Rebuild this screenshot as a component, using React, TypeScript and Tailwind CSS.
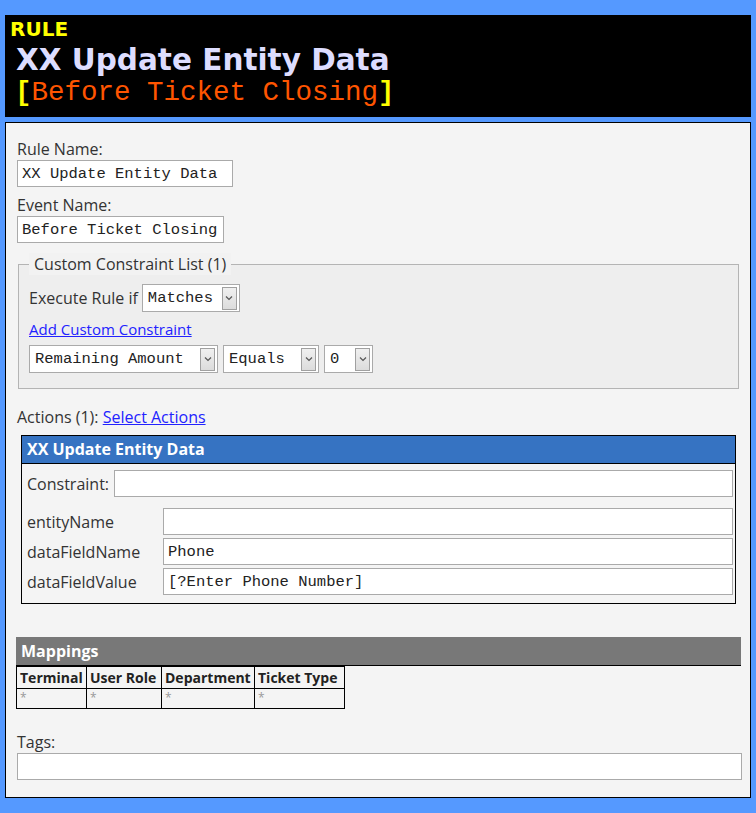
import React from "react";

const sans = "font-['Open_Sans','Noto_Sans',sans-serif]";
const mono = "font-['Liberation_Mono','DejaVu_Sans_Mono',monospace]";

function TextBox({ value, className = "" }: { value?: string; className?: string }) {
  return (
    <div
      className={`h-[27px] border border-[#aaaaaa] bg-white flex items-center px-[4px] pt-[3px] text-[15.5px] text-[#222] ${mono} ${className}`}
    >
      {value}
    </div>
  );
}

function Chevron() {
  return (
    <svg width="8" height="6" viewBox="0 0 8 6" className="block">
      <path d="M1 1.5 L4 4.5 L7 1.5" fill="none" stroke="#555" strokeWidth="1.2" />
    </svg>
  );
}

function Select({ value, width }: { value: string; width: string }) {
  return (
    <div
      className={`h-[28px] ${width} border border-[#aaaaaa] bg-white flex items-center justify-between pl-[5px] pr-[2px] text-[15.5px] text-[#222] ${mono}`}
    >
      <span className="pt-[2px]">{value}</span>
      <span className="w-[15px] h-[23px] border border-[#a0a0a0] bg-gradient-to-b from-[#f0f0f0] to-[#dcdcdc] flex items-center justify-center">
        <Chevron />
      </span>
    </div>
  );
}

function ParamRow({ label, value }: { label: string; value?: string }) {
  return (
    <div className="flex items-center h-[27px] mt-[3px]">
      <div className="w-[136px] shrink-0 text-[16px] text-[#333]">{label}</div>
      <TextBox value={value} className="flex-1" />
    </div>
  );
}

export default function App() {
  return (
    <div className={`min-h-[813px] bg-[#5599ff] pt-[15px] px-[5px] pb-[16px] ${sans}`}>
      {/* rule title banner */}
      <div className="bg-black h-[102px] pl-[5px] pt-[3px]">
        <div className="font-['DejaVu_Sans','Verdana',sans-serif] font-bold text-[20px] leading-[22px] text-[#ffff00]">
          RULE
        </div>
        <div className="font-['DejaVu_Sans','Verdana',sans-serif] font-bold text-[29.5px] leading-[33px] mt-[4px] text-[#ddddff] pl-[6px]">
          XX Update Entity Data
        </div>
        <div className={`text-[27.5px] leading-[32px] pl-[5px] ${mono}`}>
          <span className="text-[#ffff00] font-bold">[</span>
          <span className="text-[#ff5500]">Before Ticket Closing</span>
          <span className="text-[#ffff00] font-bold">]</span>
        </div>
      </div>

      {/* editor panel */}
      <div className="mt-[5px] border border-black bg-[#f4f4f4] pl-[11px] pr-[8px] pt-[15px] pb-[17px] text-[#333]">
        <div className="h-[22px] text-[16px] leading-[22px]">Rule Name:</div>
        <TextBox value="XX Update Entity Data" className="w-[216px]" />

        <div className="h-[22px] mt-[7px] text-[16px] leading-[22px]">Event Name:</div>
        <TextBox value="Before Ticket Closing" className="w-[207px]" />

        <fieldset className="mt-[10px] ml-[1px] mr-[3px] border border-[#b4b4b4] bg-[#eeeeee] pl-[10px] pb-[15px]">
          <legend className="px-[5px] bg-[#f2f2f2] text-[16px] leading-[22px] text-[#333]">
            Custom Constraint List (1)
          </legend>
          <div className="flex items-center gap-[4px] mt-[9px]">
            <span className="text-[16px]">Execute Rule if</span>
            <Select value="Matches" width="w-[98px]" />
          </div>
          <div className="mt-[8px] h-[18px] leading-[18px]">
            <a href="#" className="text-[15px] text-[#2222ff] underline">
              Add Custom Constraint
            </a>
          </div>
          <div className="flex gap-[5px] mt-[7px]">
            <Select value="Remaining Amount" width="w-[189px]" />
            <Select value="Equals" width="w-[96px]" />
            <Select value="0" width="w-[49px]" />
          </div>
        </fieldset>

        <div className="mt-[16px] h-[24px] text-[16px] leading-[24px]">
          Actions (1):{" "}
          <a href="#" className="text-[#2222ff] underline">
            Select Actions
          </a>
        </div>

        {/* action card */}
        <div className="mt-[6px] ml-[4px] mr-[6px] border border-black">
          <div className="h-[28px] bg-[#3673c2] border-b border-black pl-[5px] text-white font-bold text-[16px] leading-[27px]">
            XX Update Entity Data
          </div>
          <div className="pl-[5px] pr-[2px] pt-[6px] pb-[8px]">
            <div className="flex items-center h-[27px] gap-[5px]">
              <span className="text-[16px]">Constraint:</span>
              <TextBox className="flex-1" />
            </div>
            <div className="h-[8px]" />
            <ParamRow label="entityName" />
            <ParamRow label="dataFieldName" value="Phone" />
            <ParamRow label="dataFieldValue" value="[?Enter Phone Number]" />
          </div>
        </div>

        {/* mappings */}
        <div className="mt-[33px] -ml-[1px] mr-[1px] h-[29px] bg-[#787878] border-b border-black pl-[5px] text-white font-bold text-[16px] leading-[28px]">
          Mappings
        </div>
        <table className="-ml-[1px] border-collapse text-[14px]">
          <thead>
            <tr>
              {[
                ["Terminal", "w-[70px]"],
                ["User Role", "w-[75px]"],
                ["Department", "w-[93px]"],
                ["Ticket Type", "w-[90px]"],
              ].map(([h, w]) => (
                <th
                  key={h}
                  className={`${w} h-[22px] border border-black px-[3px] text-left font-bold text-[#222] whitespace-nowrap`}
                >
                  {h}
                </th>
              ))}
            </tr>
          </thead>
          <tbody>
            <tr>
              {[0, 1, 2, 3].map((i) => (
                <td key={i} className="h-[20px] border border-black px-[3px] text-[12px] leading-[18px] text-[#999] align-top">
                  *
                </td>
              ))}
            </tr>
          </tbody>
        </table>

        <div className="mt-[22px] h-[22px] text-[16px] leading-[22px]">Tags:</div>
        <TextBox className="w-[725px]" />
      </div>
    </div>
  );
}
